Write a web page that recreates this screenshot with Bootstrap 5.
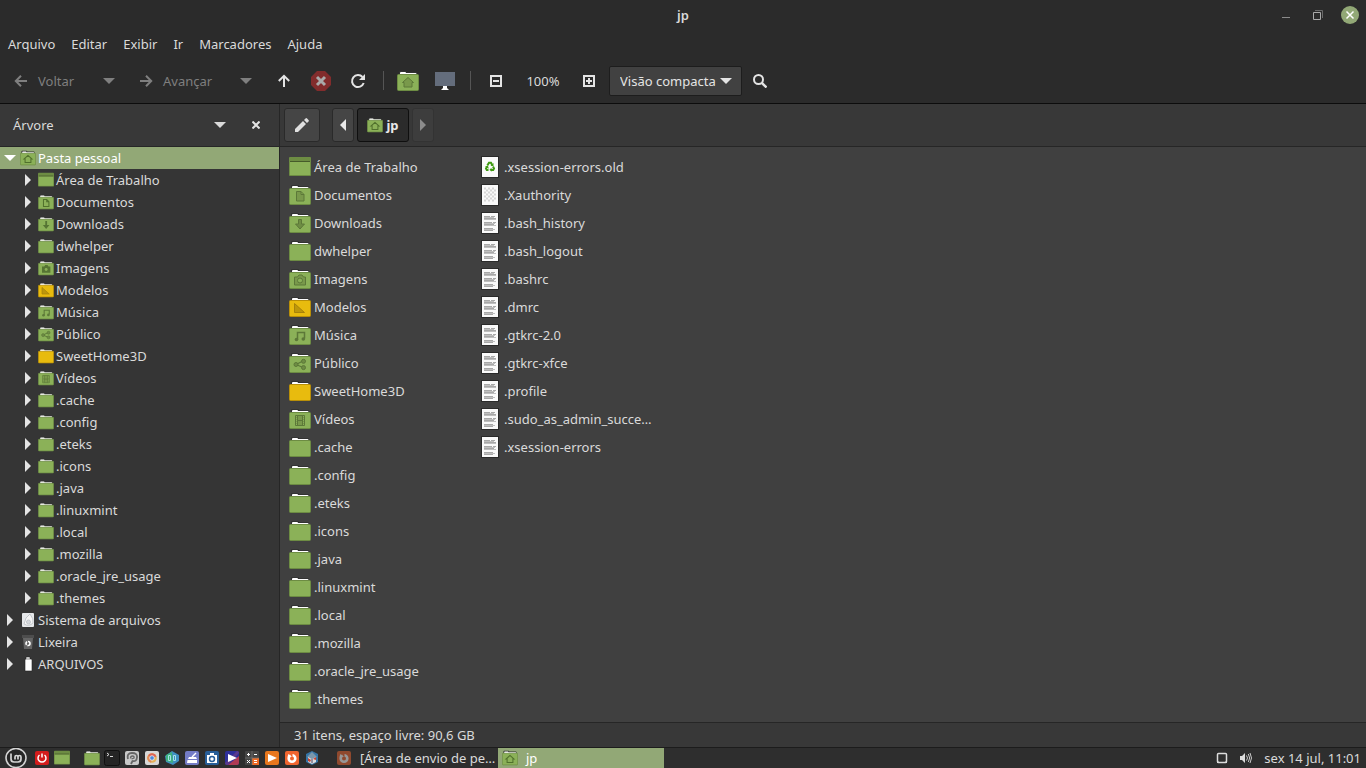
<!DOCTYPE html>
<html lang="pt-BR">
<head>
<meta charset="utf-8">
<meta name="viewport" content="width=device-width, initial-scale=1">
<title>jp</title>
<link href="https://cdn.jsdelivr.net/npm/bootstrap@5.3.0/dist/css/bootstrap.min.css" rel="stylesheet">
<style>
:root{--chrome:#2b2b2b;--bar:#383838;--tree:#353535;--view:#404040;--edge:#262626;--accent:#92a876;--ink:#dadada}
body{font:13px/20px "Noto Sans","Open Sans",sans-serif;background:var(--chrome);color:var(--ink)}
a,a:hover{color:inherit;text-decoration:none}
button{background:none;border:0;padding:0;color:inherit;font:inherit}
svg{display:block;flex:none}
.i22{width:22px;height:22px}.i16{width:16px;height:16px}
.titlebar{height:30px;font-weight:600}
.wing{flex:1 1 0}
.wm{width:32px}
.menus{height:28px;gap:16px;padding-left:8px}
.tools{height:46px;border-bottom:1px solid #0c0c0c}
.tool{height:42px;width:36px;display:flex;align-items:center;justify-content:center;flex:none}
.tool.w38{width:38px}.tool.w56{width:56px}
.tool.labelled{justify-content:flex-start;gap:10px;width:90px;padding-left:14px}
.tool.forward{width:99px;padding-left:11px}
.dim{color:#7f7f7f}
.rule{width:1px;height:19px;background:#555;margin:0 6px}
.viewmode{width:133px;height:30px;margin-left:2px;padding:0 24px 0 10px;border:1px solid #1d1d1d;border-radius:2px;color:#e4e4e4;appearance:none;font:inherit;
 background:#414141 url("data:image/svg+xml,%3Csvg xmlns='http://www.w3.org/2000/svg' width='12' height='6'%3E%3Cpath d='M0 0h12L6 6z' fill='%23e4e4e4'/%3E%3C/svg%3E") no-repeat right 9px center}
.side{width:280px;background:var(--tree);border-right:1px solid var(--edge)}
.strip{height:43px;background:var(--bar);border-bottom:1px solid var(--edge);padding:0 4px}
.side .strip{padding:0 5px 0 13px}
.knot{height:22px;display:flex;align-items:center;white-space:nowrap}
.knot .tw{width:20px;display:flex;justify-content:center;flex:none;color:#e4e4e4}
.knot .i16{margin-right:2px}
.kids .knot{padding-left:18px}
.knot.picked,.knot.picked .tw{background:var(--accent);color:#fff}
.crumbs{gap:3px;margin-left:12px}
.crumb{height:34px;width:22px;border:1px solid #2a2a2a;border-radius:3px;background:#454545;display:flex;align-items:center;justify-content:center;gap:3px}
.crumb.edit{width:36px}
.crumb.here{width:52px;background:#2b2b2b;border-color:#0f0f0f;font-weight:700;color:#e8e8e8}
.crumb.off{background:#3d3d3d;border-color:#333;color:#8c8c8c}
.files{background:var(--view);display:grid;grid-auto-flow:column;grid-template-rows:repeat(20,28px);grid-auto-columns:190px;padding:6px 9px;align-content:start}
.files a{display:flex;align-items:center;gap:3px;white-space:nowrap}
.status{height:25px;background:var(--bar);border-top:1px solid var(--edge);padding-left:14px}
.panel{height:21px;border-top:1px solid #1c1c1c;background:#2e2e2e}
.launch{width:20px;height:20px;display:flex;align-items:center;justify-content:center}
.launch.start{width:32px}
.launchers{padding:0 10px}
.task{width:166px;height:20px;display:flex;align-items:center;gap:8px;padding-left:4px;white-space:nowrap}
.task.on{background:var(--accent);color:#fff}
.tray{padding-right:5px}
</style>
</head>
<body>
<svg width="0" height="0" class="position-absolute" aria-hidden="true"><defs>
<symbol id="folder" viewBox="0 0 22 22"><path d="M2 4V2q0-1 1-1h6q1 0 1 1h9q1 0 1 1v1z" fill="#333"/><path d="M3 5V3q0-1 1-1h4q1 0 1 1h9.500q1 0 1 1v1z" fill="#fff"/><rect x=".5" y="4.500" width="21" height="16" rx="1" fill="#8bb158" stroke="#6d8c43"/></symbol>
<symbol id="gold" viewBox="0 0 22 22"><path d="M2 4V2q0-1 1-1h6q1 0 1 1h9q1 0 1 1v1z" fill="#333"/><path d="M3 5V3q0-1 1-1h4q1 0 1 1h9.500q1 0 1 1v1z" fill="#fff"/><rect x=".5" y="4.500" width="21" height="16" rx="1" fill="#e8bb0e" stroke="#b98f08"/></symbol>
<symbol id="desk" viewBox="0 0 22 22"><rect y="1" width="22" height="19" rx="1" fill="#6d8c43"/><rect x="1" y="6" width="20" height="13" fill="#8bb158"/><path d="M1 5.500h20" stroke="#465a2a"/></symbol>
<symbol id="home" viewBox="0 0 22 22"><use href="#folder"/><path d="M11 7.500 5.500 12.500h1.500v4.500h8v-4.500h1.500z" fill="#79994b" stroke="#5c7838"/></symbol>
<symbol id="home-s" viewBox="0 0 22 22"><use href="#folder"/><path d="M11 7.500 5.500 12.500h1.500v4.800h8v-4.800h1.500z" fill="#8bb158" stroke="#50702c" stroke-width="1.400"/></symbol>
<symbol id="docs" viewBox="0 0 22 22"><use href="#folder"/><path d="M7.500 7.500h4.500l3 3v6.500H7.500zM12 7.500v3h3" fill="#79994b" stroke="#5c7838"/></symbol>
<symbol id="docs-s" viewBox="0 0 22 22"><use href="#folder"/><path d="M7.500 7.500h4.500l3 3v6.800H7.500zM12 7.500v3h3" fill="none" stroke="#50702c" stroke-width="1.400"/></symbol>
<symbol id="down" viewBox="0 0 22 22"><use href="#folder"/><path d="M9.500 7.500h3v4.500h3L11 17l-4.500-5h3z" fill="#6e8d44" stroke="#5c7838"/></symbol>
<symbol id="down-s" viewBox="0 0 22 22"><use href="#folder"/><path d="M10 7h2.500v5.500h3.200L11.200 18l-4.500-5.500H10z" fill="#557433"/></symbol>
<symbol id="pics" viewBox="0 0 22 22"><use href="#folder"/><path d="M5.500 9h3l1.500-2h3l1.500 2h2v8h-11z" fill="#79994b" stroke="#5c7838"/><circle cx="11" cy="12.500" r="2.500" fill="#8bb158" stroke="#5c7838"/></symbol>
<symbol id="pics-s" viewBox="0 0 22 22"><use href="#folder"/><path d="M5.500 9h3l1.500-2h3l1.500 2h2.500v8.500h-11.500z" fill="#557433"/><circle cx="11.200" cy="13" r="2" fill="#8bb158"/></symbol>
<symbol id="models" viewBox="0 0 22 22"><use href="#gold"/><path d="M5.500 7.500v9h10z" fill="#bd970b" stroke="#a78209"/></symbol>
<symbol id="music" viewBox="0 0 22 22"><use href="#folder"/><path d="M8.500 15.500V8.500h7v6" fill="none" stroke="#5c7838" stroke-width="1.500"/><circle cx="7.500" cy="15.500" r="1.800" fill="#5c7838"/><circle cx="14.300" cy="15" r="1.800" fill="#5c7838"/></symbol>
<symbol id="share" viewBox="0 0 22 22"><use href="#folder"/><path d="M7 12.500l7-3.500M7 12.500l7 3" stroke="#5c7838" stroke-width="1.300"/><g fill="#6e8d44" stroke="#5c7838"><circle cx="7" cy="12.500" r="2"/><circle cx="14.500" cy="9.300" r="2"/><circle cx="14.500" cy="15.600" r="2"/></g></symbol>
<symbol id="video" viewBox="0 0 22 22"><use href="#folder"/><path d="M6.500 7.500h9v10h-9z" fill="#79994b" stroke="#5c7838"/><path d="M8.500 8v9M13.500 8v9M8.500 12.500h5" stroke="#5c7838"/><path d="M7.500 8v9M14.500 8v9" stroke="#8bb158" stroke-dasharray="1 1"/></symbol>
<symbol id="page" viewBox="0 0 22 22"><rect x="2.500" y=".5" width="17" height="21" fill="#fafafa" stroke="#2a2a2a"/></symbol>
<symbol id="text" viewBox="0 0 22 22"><use href="#page"/><path d="M5 4.500h6m1 0h4M5 6.500h12M5 10.500h8m1 0h3M5 12.500h10M5 16.500h9M5 18.500h9" stroke="#a8a8a8"/><path d="M5 5.500h10M5 7.500h12M5 11.500h11M5 13.500h12M5 17.500h11" stroke="#bfbfbf"/></symbol>
<symbol id="check" viewBox="0 0 22 22"><use href="#page"/><path d="M5 4.500h12M5 8.500h12M5 12.500h12M5 16.500h12" stroke="#d6d6d6" stroke-width="2" stroke-dasharray="2 2"/><path d="M7 6.500h10M7 10.500h10M7 14.500h10" stroke="#d6d6d6" stroke-width="2" stroke-dasharray="2 2"/></symbol>
<symbol id="cycle" viewBox="0 0 22 22"><g fill="none" stroke="currentColor" stroke-width="2"><path d="M8.300 10.500 10 7.700h2l1.200 2.300M14 11.500l1 2-.8 1.500H12M9.500 15H7.800L7 13.500l1-1.700"/></g><path d="M14.500 8v3h-3zM12.500 12.700v4l-2-2zM6 11.500l3-.7.8 2.900z" fill="currentColor"/></symbol>
<symbol id="old" viewBox="0 0 22 22"><use href="#page"/><use href="#cycle" y="-1" color="#3f9a12"/></symbol>
<symbol id="tri" viewBox="0 0 7 12"><path d="M0 0 6 6 0 12z" fill="currentColor"/></symbol>
<symbol id="caret" viewBox="0 0 12 6"><path d="M0 0h12L6 6z" fill="currentColor"/></symbol>
<symbol id="arrow" viewBox="0 0 14 14"><path d="M13 7H2M7 1.800 1.800 7 7 12.200" fill="none" stroke="currentColor" stroke-width="2"/></symbol>
<symbol id="fox" viewBox="0 0 16 16"><rect x="1" y="1" width="14" height="14" rx="2" fill="#f0652f"/><circle cx="8" cy="8.500" r="3.300" fill="none" stroke="#fff" stroke-width="2.600"/><path d="M5.500 3.500 8.500 3v4L7 6z" fill="#f0652f"/><path d="M3.500 7.500 4.200 4l2.300 2z" fill="#fff"/></symbol>
</defs></svg>

<div class="min-vh-100 d-flex flex-column">
<header>
 <div class="titlebar d-flex align-items-center">
  <div class="wing"></div><span>jp</span>
  <div class="wing d-flex justify-content-end">
   <button class="wm" aria-label="Minimizar"><svg width="32" height="30" viewBox="0 0 32 30"><path d="M12 17.500h8" stroke="#8b8b8b"/></svg></button>
   <button class="wm" aria-label="Restaurar"><svg width="32" height="30" viewBox="0 0 32 30"><path d="M11.500 12.500h7v7h-7z" fill="none" stroke="#aaa"/><path d="M13 10.500h7.500V18" fill="none" stroke="#6a6a6a"/></svg></button>
   <button class="wm" aria-label="Fechar"><svg width="32" height="30" viewBox="0 0 32 30"><circle cx="16" cy="15" r="9" fill="var(--accent)"/><path d="m12.500 11.500 7 7m0-7-7 7" stroke="#fff" stroke-width="1.500"/></svg></button>
  </div>
 </div>
 <nav class="menus d-flex align-items-center"><a href="#">Arquivo</a><a href="#">Editar</a><a href="#">Exibir</a><a href="#">Ir</a><a href="#">Marcadores</a><a href="#">Ajuda</a></nav>
 <div class="tools d-flex align-items-center">
  <button class="tool labelled dim"><svg width="14" height="14"><use href="#arrow"/></svg>Voltar</button>
  <button class="tool w38 dim" aria-label="Histórico anterior"><svg width="12" height="6"><use href="#caret"/></svg></button>
  <button class="tool labelled forward dim"><svg width="14" height="14" viewBox="0 0 14 14"><path d="M1 7h11M7 1.800 12.200 7 7 12.200" fill="none" stroke="currentColor" stroke-width="2"/></svg>Avançar</button>
  <button class="tool w38 dim" aria-label="Histórico seguinte"><svg width="12" height="6"><use href="#caret"/></svg></button>
  <button class="tool w38" aria-label="Acima"><svg width="14" height="14" viewBox="0 0 14 14"><path d="M7 13V2M1.800 7 7 1.800 12.200 7" fill="none" stroke="#e4e4e4" stroke-width="2"/></svg></button>
  <button class="tool" aria-label="Parar"><svg width="20" height="20" viewBox="0 0 20 20"><path d="M6 0h8l6 6v8l-6 6H6l-6-6V6z" fill="#822c2c"/><path d="m6 6 8 8m0-8-8 8" stroke="#aaa" stroke-width="3"/></svg></button>
  <button class="tool w38" aria-label="Recarregar"><svg width="16" height="16" viewBox="0 0 16 16"><path d="M12.500 4A6 6 0 1 0 13.700 10" fill="none" stroke="#e4e4e4" stroke-width="2"/><path d="M15 1v6H9z" fill="#e4e4e4"/></svg></button>
  <span class="rule"></span>
  <button class="tool" aria-label="Pasta pessoal"><svg class="i22"><use href="#home"/></svg></button>
  <button class="tool w38" aria-label="Computador"><svg class="i22" viewBox="0 0 22 22"><path d="M1 2h20v14H1z" fill="#646d7c"/><path d="M9 16h4v2l2 2H7l2-2z" fill="#fff"/></svg></button>
  <span class="rule"></span>
  <button class="tool w38" aria-label="Reduzir"><svg width="12" height="12" viewBox="0 0 12 12"><path d="M1 1h10v10H1zM3 6h6" fill="none" stroke="#e4e4e4" stroke-width="2"/></svg></button>
  <button class="tool w56">100%</button>
  <button class="tool" aria-label="Ampliar"><svg width="12" height="12" viewBox="0 0 12 12"><path d="M1 1h10v10H1zM3 6h6M6 3v6" fill="none" stroke="#e4e4e4" stroke-width="2"/></svg></button>
  <select class="viewmode" aria-label="Modo de exibição"><option>Visão compacta</option></select>
  <button class="tool" aria-label="Pesquisar"><svg width="14" height="14" viewBox="0 0 14 14"><circle cx="5.500" cy="5.500" r="4.500" fill="none" stroke="#e4e4e4" stroke-width="2"/><path d="m8.800 8.800 4.700 4.700" stroke="#e4e4e4" stroke-width="2.400"/></svg></button>
 </div>
</header>

<div class="d-flex flex-grow-1">
 <aside class="side flex-shrink-0">
  <div class="strip d-flex align-items-center">
   <span class="me-auto">Árvore</span>
   <button class="tool" aria-label="Escolher painel"><svg width="12" height="6"><use href="#caret"/></svg></button>
   <button class="tool" aria-label="Fechar painel"><svg width="8" height="8" viewBox="0 0 8 8"><path d="m.5.5 7 7m0-7-7 7" stroke="#e4e4e4" stroke-width="2"/></svg></button>
  </div>
  <a class="knot picked" href="#"><span class="tw"><svg width="12" height="6"><use href="#caret"/></svg></span><svg class="i16"><use href="#home-s"/></svg>Pasta pessoal</a>
  <div class="kids">
   <a class="knot" href="#"><span class="tw"><svg width="7" height="12"><use href="#tri"/></svg></span><svg class="i16"><use href="#desk"/></svg>Área de Trabalho</a>
   <a class="knot" href="#"><span class="tw"><svg width="7" height="12"><use href="#tri"/></svg></span><svg class="i16"><use href="#docs-s"/></svg>Documentos</a>
   <a class="knot" href="#"><span class="tw"><svg width="7" height="12"><use href="#tri"/></svg></span><svg class="i16"><use href="#down-s"/></svg>Downloads</a>
   <a class="knot" href="#"><span class="tw"><svg width="7" height="12"><use href="#tri"/></svg></span><svg class="i16"><use href="#folder"/></svg>dwhelper</a>
   <a class="knot" href="#"><span class="tw"><svg width="7" height="12"><use href="#tri"/></svg></span><svg class="i16"><use href="#pics-s"/></svg>Imagens</a>
   <a class="knot" href="#"><span class="tw"><svg width="7" height="12"><use href="#tri"/></svg></span><svg class="i16"><use href="#models"/></svg>Modelos</a>
   <a class="knot" href="#"><span class="tw"><svg width="7" height="12"><use href="#tri"/></svg></span><svg class="i16"><use href="#music"/></svg>Música</a>
   <a class="knot" href="#"><span class="tw"><svg width="7" height="12"><use href="#tri"/></svg></span><svg class="i16"><use href="#share"/></svg>Público</a>
   <a class="knot" href="#"><span class="tw"><svg width="7" height="12"><use href="#tri"/></svg></span><svg class="i16"><use href="#gold"/></svg>SweetHome3D</a>
   <a class="knot" href="#"><span class="tw"><svg width="7" height="12"><use href="#tri"/></svg></span><svg class="i16"><use href="#video"/></svg>Vídeos</a>
   <a class="knot" href="#"><span class="tw"><svg width="7" height="12"><use href="#tri"/></svg></span><svg class="i16"><use href="#folder"/></svg>.cache</a>
   <a class="knot" href="#"><span class="tw"><svg width="7" height="12"><use href="#tri"/></svg></span><svg class="i16"><use href="#folder"/></svg>.config</a>
   <a class="knot" href="#"><span class="tw"><svg width="7" height="12"><use href="#tri"/></svg></span><svg class="i16"><use href="#folder"/></svg>.eteks</a>
   <a class="knot" href="#"><span class="tw"><svg width="7" height="12"><use href="#tri"/></svg></span><svg class="i16"><use href="#folder"/></svg>.icons</a>
   <a class="knot" href="#"><span class="tw"><svg width="7" height="12"><use href="#tri"/></svg></span><svg class="i16"><use href="#folder"/></svg>.java</a>
   <a class="knot" href="#"><span class="tw"><svg width="7" height="12"><use href="#tri"/></svg></span><svg class="i16"><use href="#folder"/></svg>.linuxmint</a>
   <a class="knot" href="#"><span class="tw"><svg width="7" height="12"><use href="#tri"/></svg></span><svg class="i16"><use href="#folder"/></svg>.local</a>
   <a class="knot" href="#"><span class="tw"><svg width="7" height="12"><use href="#tri"/></svg></span><svg class="i16"><use href="#folder"/></svg>.mozilla</a>
   <a class="knot" href="#"><span class="tw"><svg width="7" height="12"><use href="#tri"/></svg></span><svg class="i16"><use href="#folder"/></svg>.oracle_jre_usage</a>
   <a class="knot" href="#"><span class="tw"><svg width="7" height="12"><use href="#tri"/></svg></span><svg class="i16"><use href="#folder"/></svg>.themes</a>
  </div>
  <a class="knot" href="#"><span class="tw"><svg width="7" height="12"><use href="#tri"/></svg></span><svg class="i16" viewBox="0 0 16 16"><rect x="2" y="1" width="12" height="14" rx="1" fill="#e6e8ea"/><path d="M4 12q1-7 6-10 4 5 3 9-4 4-9 1" fill="#f5f5f5" stroke="#c2c6cb"/><circle cx="8.500" cy="10" r="2" fill="#d5d8dc" stroke="#c2c6cb"/></svg>Sistema de arquivos</a>
  <a class="knot" href="#"><span class="tw"><svg width="7" height="12"><use href="#tri"/></svg></span><svg class="i16" viewBox="0 0 16 16"><path d="M2 1h12v3H2z" fill="#4d4d4d"/><path d="M3 4h10l-1 11H4z" fill="#656565"/><circle cx="8" cy="9.500" r="2" fill="none" stroke="#fff" stroke-width="1.600" stroke-dasharray="3.400 .8"/></svg>Lixeira</a>
  <a class="knot" href="#"><span class="tw"><svg width="7" height="12"><use href="#tri"/></svg></span><svg class="i16" viewBox="0 0 16 16"><path d="M6 1h4v2h1q1 0 1 1v11H5V4q0-1 1-1z" fill="#fff" stroke="#222" stroke-width=".6"/><path d="M6 3h4" stroke="#888"/></svg>ARQUIVOS</a>
 </aside>

 <main class="flex-grow-1 d-flex flex-column">
  <div class="strip d-flex align-items-center">
   <button class="crumb edit" aria-label="Editar local"><svg width="14" height="14" viewBox="0 0 14 14"><path d="M0 14v-3l8-8 3 3-8 8zM9 2l1.500-1.500q.8-.8 1.600 0l1.400 1.400q.8.8 0 1.600L12 5z" fill="#e0e0e0"/></svg></button>
   <div class="crumbs d-flex">
   <button class="crumb" aria-label="Anterior"><svg width="7" height="12" viewBox="0 0 7 12"><path d="M6 0 0 6l6 6z" fill="#e8e8e8"/></svg></button>
   <button class="crumb here"><svg class="i16"><use href="#home-s"/></svg>jp</button>
   <button class="crumb off" aria-label="Próximo"><svg width="7" height="12"><use href="#tri"/></svg></button>
   </div>
  </div>
  <div class="files flex-grow-1">
   <a href="#"><svg class="i22"><use href="#desk"/></svg>Área de Trabalho</a>
   <a href="#"><svg class="i22"><use href="#docs"/></svg>Documentos</a>
   <a href="#"><svg class="i22"><use href="#down"/></svg>Downloads</a>
   <a href="#"><svg class="i22"><use href="#folder"/></svg>dwhelper</a>
   <a href="#"><svg class="i22"><use href="#pics"/></svg>Imagens</a>
   <a href="#"><svg class="i22"><use href="#models"/></svg>Modelos</a>
   <a href="#"><svg class="i22"><use href="#music"/></svg>Música</a>
   <a href="#"><svg class="i22"><use href="#share"/></svg>Público</a>
   <a href="#"><svg class="i22"><use href="#gold"/></svg>SweetHome3D</a>
   <a href="#"><svg class="i22"><use href="#video"/></svg>Vídeos</a>
   <a href="#"><svg class="i22"><use href="#folder"/></svg>.cache</a>
   <a href="#"><svg class="i22"><use href="#folder"/></svg>.config</a>
   <a href="#"><svg class="i22"><use href="#folder"/></svg>.eteks</a>
   <a href="#"><svg class="i22"><use href="#folder"/></svg>.icons</a>
   <a href="#"><svg class="i22"><use href="#folder"/></svg>.java</a>
   <a href="#"><svg class="i22"><use href="#folder"/></svg>.linuxmint</a>
   <a href="#"><svg class="i22"><use href="#folder"/></svg>.local</a>
   <a href="#"><svg class="i22"><use href="#folder"/></svg>.mozilla</a>
   <a href="#"><svg class="i22"><use href="#folder"/></svg>.oracle_jre_usage</a>
   <a href="#"><svg class="i22"><use href="#folder"/></svg>.themes</a>
   <a href="#"><svg class="i22"><use href="#old"/></svg>.xsession-errors.old</a>
   <a href="#"><svg class="i22"><use href="#check"/></svg>.Xauthority</a>
   <a href="#"><svg class="i22"><use href="#text"/></svg>.bash_history</a>
   <a href="#"><svg class="i22"><use href="#text"/></svg>.bash_logout</a>
   <a href="#"><svg class="i22"><use href="#text"/></svg>.bashrc</a>
   <a href="#"><svg class="i22"><use href="#text"/></svg>.dmrc</a>
   <a href="#"><svg class="i22"><use href="#text"/></svg>.gtkrc-2.0</a>
   <a href="#"><svg class="i22"><use href="#text"/></svg>.gtkrc-xfce</a>
   <a href="#"><svg class="i22"><use href="#text"/></svg>.profile</a>
   <a href="#"><svg class="i22"><use href="#text"/></svg>.sudo_as_admin_succe…</a>
   <a href="#"><svg class="i22"><use href="#text"/></svg>.xsession-errors</a>
  </div>
  <div class="status d-flex align-items-center">31 itens, espaço livre: 90,6 GB</div>
 </main>
</div>

<footer class="panel d-flex align-items-center">
 <button class="launch start" aria-label="Menu"><svg width="22" height="20" viewBox="0 0 22 20"><ellipse cx="11" cy="10" rx="10" ry="9.500" fill="#262626" stroke="#d4d4d4" stroke-width="1.600"/><path d="M6 5.500V11q0 3 3 3h4q3 0 3-3V9q0-1.500-1.500-1.500T13 9v2.500M13 9q0-1.500-1.500-1.500T10 9v2.500" fill="none" stroke="#d4d4d4" stroke-width="1.700"/></svg></button>
 <button class="launch" aria-label="Sair"><svg class="i16" viewBox="0 0 16 16"><rect x="1" y="1" width="14" height="14" rx="2" fill="#d31c1c"/><path d="M8 3.500v4M5.500 5a4 4 0 1 0 5 0" fill="none" stroke="#fff" stroke-width="1.500"/></svg></button>
 <button class="launch" aria-label="Área de trabalho"><svg class="i16"><use href="#desk"/></svg></button>
 <div class="launchers d-flex">
 <button class="launch" aria-label="Arquivos"><svg class="i16"><use href="#folder"/></svg></button>
 <button class="launch" aria-label="Terminal"><svg class="i16" viewBox="0 0 16 16"><rect x=".5" y=".5" width="15" height="15" rx="2" fill="#252525" stroke="#111"/><path d="m3 3 2 1.500L3 6M6 6.500h3" fill="none" stroke="#ddd"/></svg></button>
 <button class="launch" aria-label="Áudio"><svg class="i16" viewBox="0 0 16 16"><rect x="1" y="1" width="14" height="14" rx="2" fill="#c9c9c9"/><path d="M4 9q-1.500-6 4-6t5 4.500T8.500 11L7 14" fill="none" stroke="#666" stroke-width="1.800"/><path d="M6.500 8.500Q6.500 6 8.500 6t1.500 2L7.500 9" fill="none" stroke="#666" stroke-width="1.300"/></svg></button>
 <button class="launch" aria-label="Chromium"><svg class="i16" viewBox="0 0 16 16"><rect x="1" y="1" width="14" height="14" rx="2" fill="#d8d8d8"/><circle cx="8" cy="8" r="4.800" fill="#e5b258"/><path d="M8 8 4 5.400a4.800 4.800 0 0 1 8.500 1z" fill="#dc6256"/><path d="M8 8 4 5.400A4.800 4.800 0 0 0 7 12.700z" fill="#e08a5a"/><circle cx="8" cy="8" r="2.300" fill="#4c87d9" stroke="#fff" stroke-width=".7"/></svg></button>
 <button class="launch" aria-label="Conversor"><svg class="i16" viewBox="0 0 16 16"><path d="M1 6l7-5 7 4v6l-6 4-7-3z" fill="#3f8fc2"/><path d="M2 5 8 2l1 11-7-2z" fill="#3fb27e"/><path d="M4.500 5.500h2v5h-2zM9.500 5.500h2v5h-2z" fill="none" stroke="#a5e3e8"/></svg></button>
 <button class="launch" aria-label="Limpeza"><svg class="i16" viewBox="0 0 16 16"><rect x="1" y="1" width="14" height="14" rx="2" fill="#747cc6"/><path d="m12 3-4 4" stroke="#fff" stroke-width="1.500"/><path d="M5 7h7l1 2H4zM3.500 10h9.500v3H3z" fill="#fff"/></svg></button>
 <button class="launch" aria-label="Captura"><svg class="i16" viewBox="0 0 16 16"><rect x="1" y="1" width="14" height="14" rx="2" fill="#285e98"/><path d="M3 5h10v8H3zM6 3h4v2H6z" fill="#fff"/><circle cx="8" cy="9" r="2.500" fill="#fff" stroke="#285e98" stroke-width="1.500"/></svg></button>
 <button class="launch" aria-label="Vídeo"><svg class="i16" viewBox="0 0 16 16"><rect x="1" y="1" width="14" height="14" rx="2" fill="#2d2f99"/><path d="M1 13 13 1q2 0 2 2L4 15H3q-2 0-2-2" fill="#5a3a8c"/><path d="M4 15 15 6v7q0 2-2 2z" fill="#b03a55"/><path d="m4 4 9 4-9 4z" fill="#fff"/></svg></button>
 <button class="launch" aria-label="Calculadora"><svg class="i16" viewBox="0 0 16 16"><rect x="1" y="1" width="14" height="14" rx="1" fill="#444"/><path d="M8 8h7v7H8z" fill="#f06a24"/><path d="M1 8h14M8 1v14" stroke="#777" stroke-width=".7"/><path d="M3 4.500h3M4.500 3v3M10 4.500h3M3 10l3 3m0-3-3 3M10 10.500h3M10 12.500h3" stroke="#fff"/></svg></button>
 <button class="launch" aria-label="Reprodutor"><svg class="i16" viewBox="0 0 16 16"><rect x="1" y="1" width="14" height="14" rx="2" fill="#e8771d"/><path d="m4 4 9 4-9 4z" fill="#fff"/></svg></button>
 <button class="launch" aria-label="Firefox"><svg class="i16"><use href="#fox"/></svg></button>
 <button class="launch" aria-label="Sweet Home 3D"><svg class="i16" viewBox="0 0 16 16"><path d="m8 1 6 3v8l-6 3-6-3V4z" fill="#3675a6"/><path d="m3 7 5-5 5 5-5 2z" fill="#7b97ac"/><path d="M4 7l4 2 4-2v5l-4 2-4-2z" fill="#ddd"/><path d="M4 8l3 2-1 2-2-1zM9 9l3-2v3z" fill="#c9402f"/><path d="M8 9v4" stroke="#446"/></svg></button>
 </div>
 <button class="task"><svg class="i16 opacity-50"><use href="#fox"/></svg>[Área de envio de pe…</button>
 <button class="task on"><svg class="i16"><use href="#home-s"/></svg>jp</button>
 <div class="tray ms-auto d-flex align-items-center">
  <svg width="12" height="12" viewBox="0 0 12 12" class="me-2"><rect x="1.500" y="1.500" width="9" height="9" rx="1" fill="none" stroke="#dcdcdc" stroke-width="1.500"/><path d="M1 8v3h3zM11 8v3H8z" fill="#dcdcdc"/></svg>
  <svg width="12" height="12" viewBox="0 0 12 12" class="ms-1 me-2"><path d="M0 4h2l3-3v10L2 8H0z" fill="#dcdcdc"/><path d="M6.500 3.500q2 2.500 0 5M8.300 2q2.700 4 0 8M10 1q3 5 0 10" fill="none" stroke="#ccc"/></svg>
  <time class="ms-1">sex 14 jul, 11:01</time>
 </div>
</footer>
</div>
<script src="https://cdn.jsdelivr.net/npm/bootstrap@5.3.0/dist/js/bootstrap.bundle.min.js"></script>
</body>
</html>
